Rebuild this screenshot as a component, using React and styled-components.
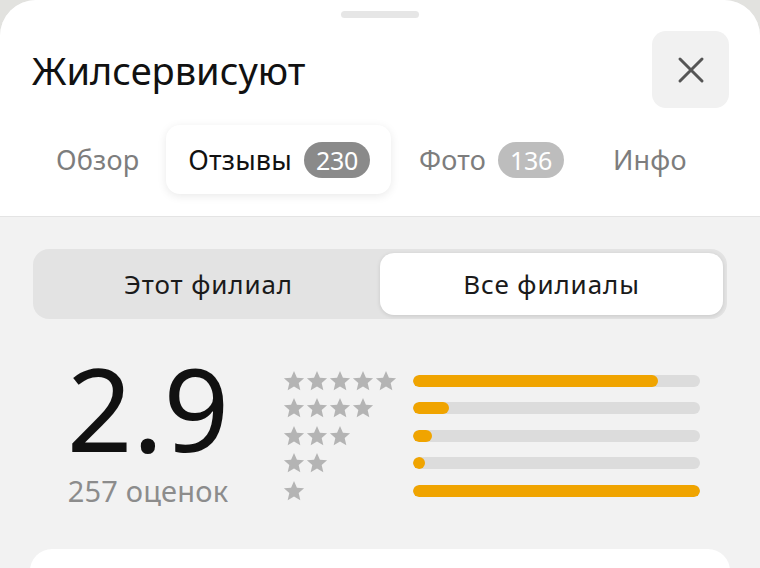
import React from "react";
import styled, { createGlobalStyle } from "styled-components";

const Global = createGlobalStyle`
  html, body { margin: 0; padding: 0; background: #e2e2df; }
  body { font-family: "Noto Sans", "Open Sans", sans-serif; -webkit-font-smoothing: antialiased; }
  * { box-sizing: border-box; }
`;

const Sheet = styled.div`
  width: 760px;
  height: 568px;
  background: #f2f2f2;
  border-radius: 36px 36px 0 0;
  overflow: hidden;
  display: flex;
  flex-direction: column;
`;

const Top = styled.div`
  background: #fff;
  border-bottom: 1px solid #e4e4e4;
  padding: 11px 32px 22px 32px;
  display: flex;
  flex-direction: column;
`;

const Handle = styled.div`
  align-self: center;
  width: 78px;
  height: 7px;
  border-radius: 4px;
  background: #e6e6e6;
`;

const HeaderRow = styled.div`
  margin-top: 13px;
  display: flex;
  justify-content: space-between;
  align-items: center;
`;

const Title = styled.h1`
  margin: 0;
  font-size: 38px;
  font-weight: 400;
  color: #111;
  letter-spacing: 0;
`;

const CloseButton = styled.button`
  width: 77px;
  height: 77px;
  margin-right: -1px;
  border: none;
  border-radius: 14px;
  background: #f1f1f1;
  display: flex;
  align-items: center;
  justify-content: center;
  padding: 0;
`;

const Tabs = styled.div`
  margin-top: 17px;
  display: flex;
  gap: 6px;
  margin-left: 2px;
`;

const Tab = styled.div`
  height: 69px;
  padding: 0 21px 0 22px;
  display: flex;
  align-items: center;
  gap: 12px;
  border-radius: 14px;
  font-size: 27px;
  letter-spacing: 0.2px;
  color: ${(p) => (p.$active ? "#111" : "#7d7d7d")};
  background: ${(p) => (p.$active ? "#fff" : "transparent")};
  box-shadow: ${(p) => (p.$active ? "0 2px 10px rgba(0,0,0,0.09)" : "none")};
`;

const Badge = styled.span`
  height: 36px;
  min-width: 66px;
  padding: 0 10px;
  border-radius: 18px;
  background: ${(p) => p.$bg};
  color: #fff;
  font-size: 25px;
  letter-spacing: -0.3px;
  display: flex;
  align-items: center;
  justify-content: center;
`;

const Body = styled.div`
  padding: 32px 33px 0 33px;
  display: flex;
  flex-direction: column;
`;

const Segmented = styled.div`
  height: 70px;
  border-radius: 16px;
  background: #e3e3e3;
  padding: 4px;
  display: grid;
  grid-template-columns: 1fr 1fr;
`;

const Segment = styled.div`
  border-radius: 14px;
  display: flex;
  align-items: center;
  justify-content: center;
  font-size: 26px;
  letter-spacing: 0.9px;
  color: #1a1a1a;
  background: ${(p) => (p.$active ? "#fff" : "transparent")};
  box-shadow: ${(p) => (p.$active ? "0 1px 4px rgba(0,0,0,0.12)" : "none")};
`;

const RatingRow = styled.div`
  margin-top: 48px;
  display: grid;
  grid-template-columns: 230px 150px 287px;
  align-items: start;
`;

const Score = styled.div`
  display: flex;
  flex-direction: column;
  align-items: center;
  margin-top: -17px;
`;

const BigNum = styled.div`
  font-size: 115px;
  line-height: 1;
  color: #111;
  font-weight: 400;
`;

const Count = styled.div`
  margin-top: 10px;
  font-size: 29px;
  line-height: 1.1;
  color: #8c8c8c;
  letter-spacing: 0.2px;
`;

const StarsCol = styled.div`
  display: flex;
  flex-direction: column;
  padding-left: 20px;
`;

const StarRow = styled.div`
  height: 27.5px;
  display: flex;
  align-items: center;
  gap: 1px;
`;

const BarsCol = styled.div`
  display: flex;
  flex-direction: column;
`;

const BarRow = styled.div`
  height: 27.5px;
  display: flex;
  align-items: center;
`;

const Track = styled.div`
  width: 100%;
  height: 12px;
  border-radius: 6px;
  background: #dcdcdc;
  overflow: hidden;
`;

const Fill = styled.div`
  height: 100%;
  border-radius: 6px;
  background: #f0a400;
`;

const Card = styled.div`
  margin: 42px -3px 0 -3px;
  height: 60px;
  background: #fff;
  border-radius: 22px 22px 0 0;
`;

const Star = () => (
  <svg width="22" height="22" viewBox="0 0 24 24">
    <path
      fill="#b4b4b4"
      d="M12 1.2l3.2 7.2 7.8.7-5.9 5.2 1.8 7.7L12 18l-6.9 4 1.8-7.7-5.9-5.2 7.8-.7z"
    />
  </svg>
);

const rows = [
  { stars: 5, pct: 85.4 },
  { stars: 4, pct: 12.5 },
  { stars: 3, pct: 6.6 },
  { stars: 2, pct: 4.2 },
  { stars: 1, pct: 100 },
];

export default function App() {
  return (
    <>
      <Global />
      <Sheet>
        <Top>
          <Handle />
          <HeaderRow>
            <Title>Жилсервисуют</Title>
            <CloseButton aria-label="Закрыть">
              <svg width="28" height="28" viewBox="0 0 28 28">
                <path d="M3 3L25 25M25 3L3 25" stroke="#555" strokeWidth="3" strokeLinecap="round" />
              </svg>
            </CloseButton>
          </HeaderRow>
          <Tabs>
            <Tab>Обзор</Tab>
            <Tab $active>
              Отзывы <Badge $bg="#8a8a8a">230</Badge>
            </Tab>
            <Tab>
              Фото <Badge $bg="#bdbdbd">136</Badge>
            </Tab>
            <Tab>Инфо</Tab>
          </Tabs>
        </Top>
        <Body>
          <Segmented>
            <Segment>Этот филиал</Segment>
            <Segment $active>Все филиалы</Segment>
          </Segmented>
          <RatingRow>
            <Score>
              <BigNum>2.9</BigNum>
              <Count>257 оценок</Count>
            </Score>
            <StarsCol>
              {rows.map((r) => (
                <StarRow key={r.stars}>
                  {Array.from({ length: r.stars }).map((_, i) => (
                    <Star key={i} />
                  ))}
                </StarRow>
              ))}
            </StarsCol>
            <BarsCol>
              {rows.map((r) => (
                <BarRow key={r.stars}>
                  <Track>
                    <Fill style={{ width: `${r.pct}%` }} />
                  </Track>
                </BarRow>
              ))}
            </BarsCol>
          </RatingRow>
          <Card />
        </Body>
      </Sheet>
    </>
  );
}
